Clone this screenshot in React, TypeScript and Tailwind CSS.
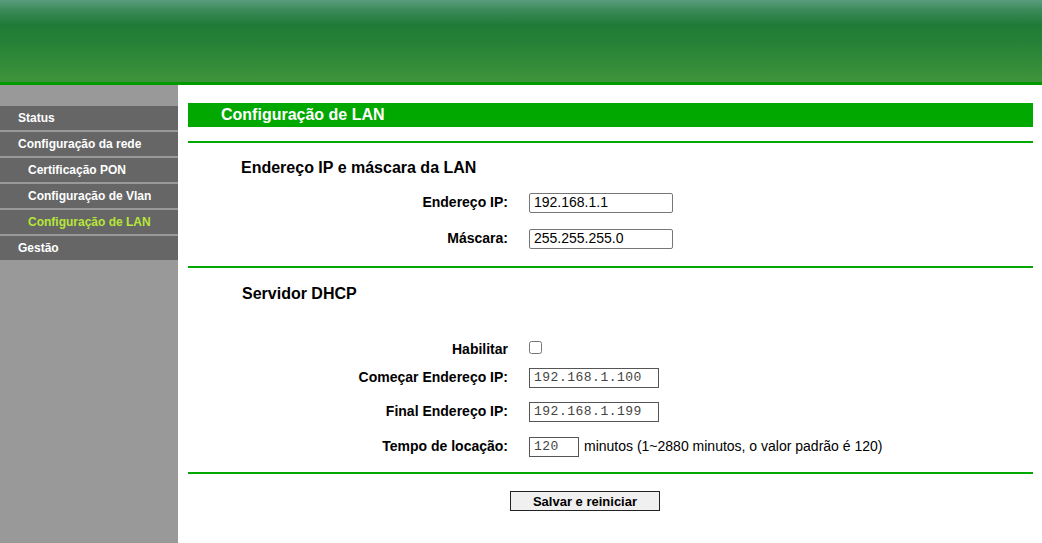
import React from "react";

const menu = [
  { label: "Status", sub: false, active: false },
  { label: "Configuração da rede", sub: false, active: false },
  { label: "Certificação PON", sub: true, active: false },
  { label: "Configuração de Vlan", sub: true, active: false },
  { label: "Configuração de LAN", sub: true, active: true },
  { label: "Gestão", sub: false, active: false },
];

const Row: React.FC<{ label: string; className?: string; children: React.ReactNode }> = ({
  label,
  className,
  children,
}) => (
  <div className={`grid grid-cols-[320px_1fr] gap-x-[21px] items-center h-[20px] ${className ?? ""}`}>
    <div className="text-right font-bold text-[14px] text-black">{label}</div>
    <div className="flex items-center">{children}</div>
  </div>
);

const mono = { fontFamily: '"Liberation Mono", "Courier New", monospace' };

const App: React.FC = () => {
  return (
    <div
      className="w-full min-h-screen flex flex-col bg-white"
      style={{ fontFamily: '"Liberation Sans", Arial, sans-serif' }}
    >
      <header className="h-[85px] shrink-0 border-b-[3px] border-[#009a00] bg-[linear-gradient(to_bottom,#5a9c7e_0px,#3c8a5a_10px,#1f7a36_25px,#2a8538_50px,#3f943b_82px)]" />

      <div className="flex flex-1">
        <aside className="w-[178px] shrink-0 bg-[#999999] pt-[21px]">
          {menu.map((m) => (
            <div
              key={m.label}
              className={`h-[24px] mb-[2px] bg-[#666666] flex items-center text-[12px] font-bold ${
                m.sub ? "pl-[28px]" : "pl-[18px]"
              } ${m.active ? "text-[#b6e63a]" : "text-white"}`}
            >
              {m.label}
            </div>
          ))}
        </aside>

        <main className="flex-1 pl-[10px] pr-[9px] pt-[18px]">
          <div className="h-[24px] bg-[#00a800] flex items-center pl-[33px] text-white font-bold text-[16px]">
            Configuração de LAN
          </div>
          <div className="mt-[14px] h-[2px] bg-[#00a800]" />

          <div className="mt-[16px] h-[18px] leading-[18px] pl-[53px] font-bold text-[16px] text-black">
            Endereço IP e máscara da LAN
          </div>
          <Row label="Endereço IP:" className="mt-[15px]">
            <input
              readOnly
              value="192.168.1.1"
              className="w-[144px] h-[20px] border border-[#767676] rounded-[2px] px-[4px] text-[14px] text-black outline-none"
            />
          </Row>
          <Row label="Máscara:" className="mt-[16px]">
            <input
              readOnly
              value="255.255.255.0"
              className="w-[144px] h-[20px] border border-[#767676] rounded-[2px] px-[4px] text-[14px] text-black outline-none"
            />
          </Row>
          <div className="mt-[18px] h-[2px] bg-[#00a800]" />

          <div className="mt-[17px] h-[18px] leading-[18px] pl-[54px] font-bold text-[16px] text-black">
            Servidor DHCP
          </div>
          <Row label="Habilitar" className="mt-[36px]">
            <input type="checkbox" className="w-[13px] h-[13px] m-0 -mt-[4px] accent-[#767676]" />
          </Row>
          <Row label="Começar Endereço IP:" className="mt-[8px]">
            <input
              readOnly
              value="192.168.1.100"
              className="w-[130px] h-[20px] border border-[#555] px-[4px] text-[13px] tracking-[0.5px] text-[#444] outline-none"
              style={mono}
            />
          </Row>
          <Row label="Final Endereço IP:" className="mt-[14px]">
            <input
              readOnly
              value="192.168.1.199"
              className="w-[130px] h-[20px] border border-[#555] px-[4px] text-[13px] tracking-[0.5px] text-[#444] outline-none"
              style={mono}
            />
          </Row>
          <Row label="Tempo de locação:" className="mt-[15px]">
            <input
              readOnly
              value="120"
              className="w-[50px] h-[20px] border border-[#555] px-[4px] text-[13px] tracking-[0.5px] text-[#444] outline-none"
              style={mono}
            />
            <span className="ml-[5px] text-[14px] text-black">
              minutos (1~2880 minutos, o valor padrão é 120)
            </span>
          </Row>
          <div className="mt-[16px] h-[2px] bg-[#00a800]" />

          <div className="mt-[15px] pl-[322px]">
            <button className="w-[150px] h-[20px] border border-[#222] bg-[#f0f0f0] text-[13px] font-bold text-black">
              Salvar e reiniciar
            </button>
          </div>
        </main>
      </div>
    </div>
  );
};

export default App;
